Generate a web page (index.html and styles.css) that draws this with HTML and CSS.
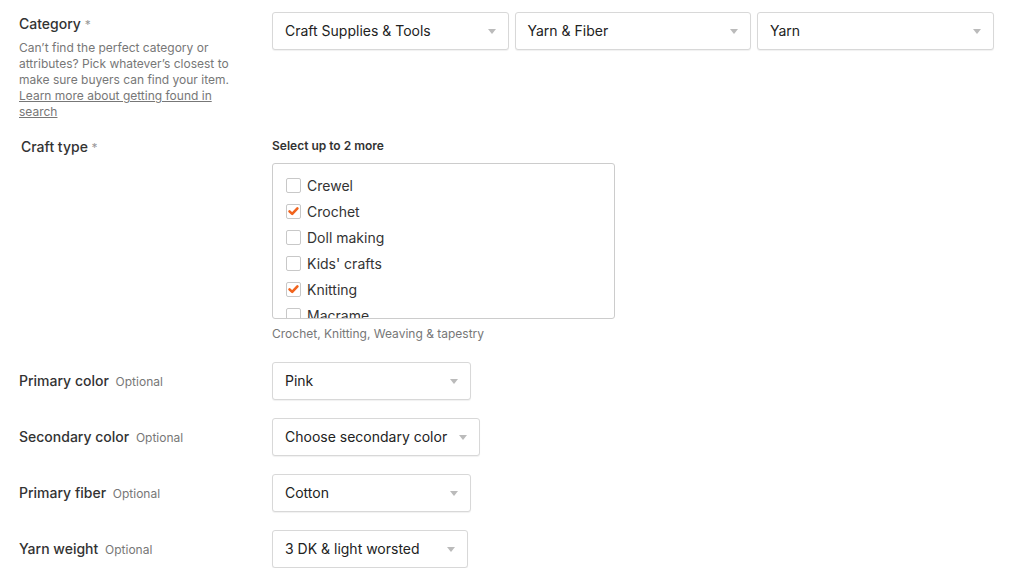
FILE: index.html
```html
<!DOCTYPE html>
<html>
<head>
<meta charset="utf-8">
<link rel="stylesheet" href="styles.css">
</head>
<body>
<div class="page">
  <div class="row row-category">
    <div class="label-col">
      <div class="label">Category <span class="req">*</span></div>
      <p class="help">Can’t find the perfect category or attributes? Pick whatever’s closest to make sure buyers can find your item. <a href="#">Learn more about getting found in search</a></p>
    </div>
    <div class="field-col selects">
      <div class="select w236">Craft Supplies &amp; Tools<span class="arrow"></span></div>
      <div class="select w236">Yarn &amp; Fiber<span class="arrow"></span></div>
      <div class="select w236">Yarn<span class="arrow"></span></div>
    </div>
  </div>

  <div class="row row-craft">
    <div class="label-col">
      <div class="label indent">Craft type <span class="req">*</span></div>
    </div>
    <div class="field-col">
      <div class="hint">Select up to 2 more</div>
      <div class="checklist">
        <div class="check"><span class="box"></span>Crewel</div>
        <div class="check"><span class="box on"><svg viewBox="0 0 15 15" width="15" height="15"><path d="M2.9 7.3 L6 10.3 L12 3.9" fill="none" stroke="#f1641e" stroke-width="3" stroke-linecap="round" stroke-linejoin="round"/></svg></span>Crochet</div>
        <div class="check"><span class="box"></span>Doll making</div>
        <div class="check"><span class="box"></span>Kids' crafts</div>
        <div class="check"><span class="box on"><svg viewBox="0 0 15 15" width="15" height="15"><path d="M2.9 7.3 L6 10.3 L12 3.9" fill="none" stroke="#f1641e" stroke-width="3" stroke-linecap="round" stroke-linejoin="round"/></svg></span>Knitting</div>
        <div class="check"><span class="box"></span>Macrame</div>
      </div>
      <div class="caption">Crochet, Knitting, Weaving &amp; tapestry</div>
    </div>
  </div>

  <div class="row row-attr first">
    <div class="label-col"><div class="label">Primary color <span class="opt">Optional</span></div></div>
    <div class="field-col"><div class="select w199">Pink<span class="arrow"></span></div></div>
  </div>
  <div class="row row-attr">
    <div class="label-col"><div class="label">Secondary color <span class="opt">Optional</span></div></div>
    <div class="field-col"><div class="select w208">Choose secondary color<span class="arrow"></span></div></div>
  </div>
  <div class="row row-attr">
    <div class="label-col"><div class="label">Primary fiber <span class="opt">Optional</span></div></div>
    <div class="field-col"><div class="select w199">Cotton<span class="arrow"></span></div></div>
  </div>
  <div class="row row-attr">
    <div class="label-col"><div class="label">Yarn weight <span class="opt">Optional</span></div></div>
    <div class="field-col"><div class="select w196">3 DK &amp; light worsted<span class="arrow"></span></div></div>
  </div>
</div>
</body>
</html>
```

FILE: styles.css
```css
* { box-sizing: border-box; }
html, body { margin: 0; padding: 0; background: #fff; }
body {
  font-family: "Inter", "Roboto", "Liberation Sans", sans-serif;
  color: #222;
  -webkit-font-smoothing: antialiased;
}
.page {
  padding: 12px 0 0 19px;
}
.row {
  display: grid;
  grid-template-columns: 253px 1fr;
}
.label {
  font-size: 14px;
  line-height: 20px;
  font-weight: 500;
  color: #333;
}
.label.indent { padding-left: 2px; }
.req { color: #999; font-weight: 400; font-size: 12px; }
.opt { color: #777; font-weight: 400; font-size: 12px; margin-left: 3px; }
.row-category .label { margin-top: 2px; }
.help {
  margin: 5px 0 0;
  font-size: 12px;
  line-height: 16px;
  color: #777;
  width: 228px;
}
.help a { color: #777; text-decoration: underline; }
.selects { display: flex; gap: 6px; }
.select {
  position: relative;
  height: 38px;
  border: 1px solid #d8d8d8;
  border-radius: 3px;
  box-shadow: 0 1px 1px rgba(0,0,0,0.06);
  padding: 0 30px 0 12px;
  font-size: 14px;
  line-height: 36px;
  color: #222;
  background: #fff;
  white-space: nowrap;
}
.arrow {
  position: absolute;
  right: 12px;
  top: 16px;
  width: 0; height: 0;
  border-left: 4px solid transparent;
  border-right: 4px solid transparent;
  border-top: 5px solid #bbb;
}
.w236 { width: 236.5px; }
.w199 { width: 199px; }
.w208 { width: 208px; }
.w196 { width: 196px; }

.row-craft { margin-top: 17px; }
.row-craft .label { margin-top: 0; }
.hint {
  font-size: 12px;
  line-height: 16px;
  font-weight: 600;
  color: #333;
  margin-top: 1px;
}
.checklist {
  margin-top: 9px;
  width: 343px;
  height: 156px;
  border: 1px solid #ccc;
  border-radius: 3px;
  padding: 8px 0 0 13px;
  overflow: hidden;
}
.check {
  display: flex;
  align-items: center;
  height: 26px;
  font-size: 14px;
  color: #333;
}
.box {
  width: 15px; height: 15px;
  border: 1px solid #c8c8c8;
  border-radius: 2px;
  margin-right: 6px;
  display: flex;
  align-items: center;
  justify-content: center;
  flex: none;
}
.box svg { display: block; }
.caption {
  margin-top: 7px;
  font-size: 12px;
  line-height: 16px;
  color: #777;
}
.row-attr { margin-top: 18px; align-items: center; }
.row-attr.first { margin-top: 20px; }
```
